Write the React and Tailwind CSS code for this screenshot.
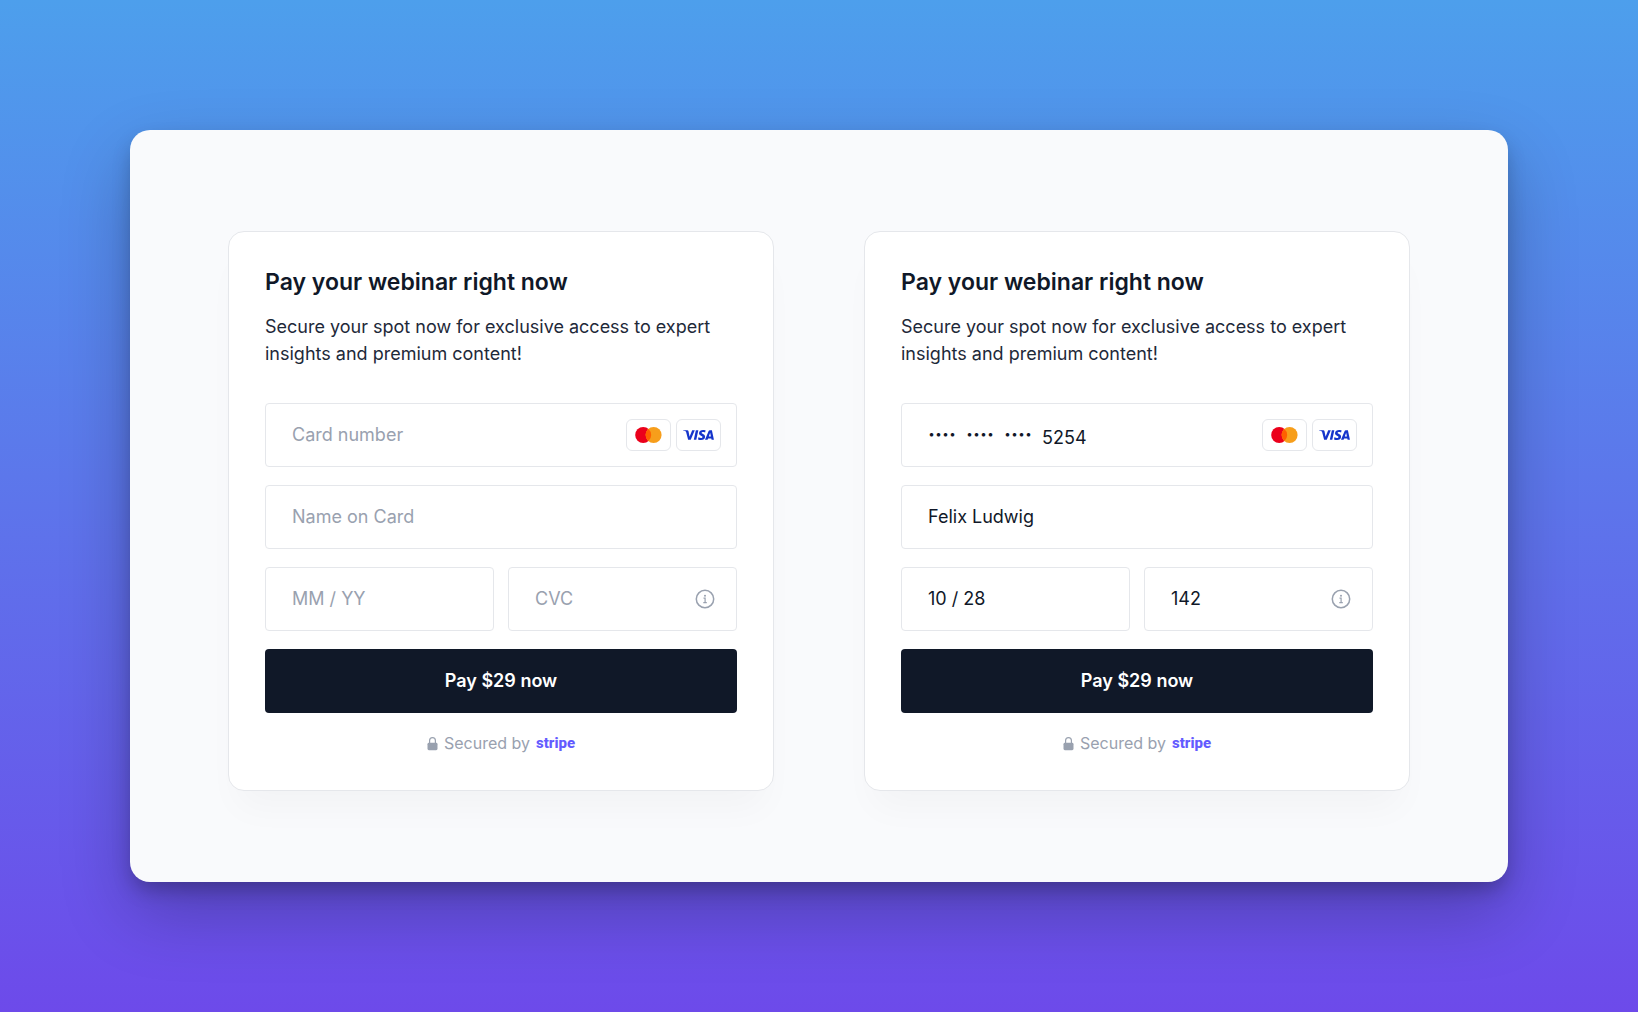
/**
 * App.jsx — Webinar checkout, empty and filled card forms
 * Stack: React + Tailwind v4
 */

import React, { useState } from 'react';

const EMPTY_CARD = { number: "", name: "", expiry: "", cvc: "" };
const SAVED_CARD = { number: "5254", name: "Felix Ludwig", expiry: "10 / 28", cvc: "142" };

const inputClass = "w-full min-w-0 bg-transparent text-lg text-gray-900 placeholder:text-gray-400 outline-none";
const boxClass = "flex h-16 items-center rounded-sm border border-gray-200 bg-white pl-[26px]";

const MastercardLogo = () => (
  <span className="flex h-8 w-[45px] items-center justify-center rounded-md border border-gray-200 bg-white">
    <svg width="27" height="16" viewBox="0 0 27 16" role="img" aria-label="Mastercard">
      <circle cx="8.2" cy="8" r="8" fill="#eb001b" />
      <circle cx="18.6" cy="8" r="8" fill="#f79e1b" />
      <path d="M13.4 1.92a8 8 0 0 1 0 12.16a8 8 0 0 1 0-12.16Z" fill="#ff5f00" />
    </svg>
  </span>
);

const VisaLogo = () => (
  <span className="flex h-8 w-[45px] items-center justify-center rounded-md border border-gray-200 bg-white">
    <svg width="31" height="10" viewBox="0 0 1000 324" role="img" aria-label="Visa">
      <path
        fill="#1434cb"
        d="M651.2.5c-70.9 0-134.3 36.8-134.3 104.7 0 77.9 112.4 83.3 112.4 122.4 0 16.5-18.9 31.2-51.1 31.2-45.7 0-79.9-20.6-79.9-20.6l-14.6 68.5s39.4 17.4 91.6 17.4c77.5 0 138.4-38.5 138.4-107.5 0-82.2-112.9-87.4-112.9-123.7 0-12.9 15.5-27 47.6-27 36.3 0 65.9 15 65.9 15l14.3-66.2S696.6.5 651.2.5ZM2.2 5.5.5 15.5s29.8 5.5 56.7 16.4c34.6 12.5 37.1 19.8 42.9 42.4l63.5 244.8h85.1L379.9 5.5h-85l-84.3 213.2-34.4-180.7c-3.2-20.7-19.1-32.5-38.7-32.5H2.2Zm411.9 0-66.6 313.6h81L494.9 5.5h-80.8Zm451.8 0c-19.5 0-29.9 10.5-37.5 28.7L709.7 319.1h85l16.4-47.5h103.6l10 47.5h75L934.2 5.5h-68.3Zm11 84.7 25.2 117.7h-67.5l42.3-117.7Z"
      />
    </svg>
  </span>
);

const InfoIcon = () => (
  <svg width="20" height="20" viewBox="0 0 20 20" fill="none" stroke="currentColor" aria-hidden="true">
    <circle cx="10" cy="10" r="8.7" strokeWidth="1.5" />
    <path d="M8.5 9.2h1.6v4.2M8.3 13.6h3.5" strokeWidth="1.2" />
    <circle cx="10" cy="6.7" r="1" fill="currentColor" stroke="none" />
  </svg>
);

const LockIcon = () => (
  <svg width="11" height="14" viewBox="0 0 11 14" fill="none" aria-hidden="true">
    <path d="M2.6 6.5V3.6a2.9 2.9 0 0 1 5.8 0v2.9" stroke="currentColor" strokeWidth="1.2" />
    <rect x="0.5" y="5.8" width="10" height="7.4" rx="1.4" fill="currentColor" />
  </svg>
);

const PaymentCard = ({ id, initial }) => {
  const [card, setCard] = useState(initial);
  const masked = initial.number !== "";

  const handleChange = (e) => {
    setCard(prev => ({ ...prev, [e.target.name]: e.target.value }));
  };

  return (
    <form
      onSubmit={(e) => e.preventDefault()}
      className="flex-1 rounded-2xl border border-gray-200 bg-white p-9 shadow-[0_26px_36px_-10px_rgba(0,0,0,0.03)]"
    >
      <h2 className="text-[23px] leading-7 font-semibold text-gray-900">Pay your webinar right now</h2>
      <p className="mt-[17px] text-lg leading-[27px] text-gray-800">
        Secure your spot now for exclusive access to expert insights and premium content!
      </p>

      <div className="mt-9 flex flex-col gap-[18px]">
        {/* Card number, with the hidden digits in front of the last four */}
        <div className={`${boxClass} pr-[15px]`}>
          {masked && (
            <span aria-hidden="true" className="mr-2.5 shrink-0 text-[21px] font-bold whitespace-pre text-gray-900">
              ····  ····  ····
            </span>
          )}
          <input
            name="number"
            aria-label="Card number"
            placeholder="Card number"
            value={card.number}
            onChange={handleChange}
            className={masked ? `${inputClass} pt-1.5` : inputClass}
          />
          <div className="flex shrink-0 gap-[5px]">
            <MastercardLogo />
            <VisaLogo />
          </div>
        </div>

        <div className={`${boxClass} pr-4`}>
          <input
            name="name"
            aria-label="Name on Card"
            placeholder="Name on Card"
            value={card.name}
            onChange={handleChange}
            className={inputClass}
          />
        </div>

        <div className="grid grid-cols-2 gap-3.5">
          <div className={`${boxClass} pr-4`}>
            <input
              name="expiry"
              aria-label="Expiry date"
              placeholder="MM / YY"
              value={card.expiry}
              onChange={handleChange}
              className={inputClass}
            />
          </div>
          <div className={`${boxClass} pr-[21px]`}>
            <input
              id={`${id}-cvc`}
              name="cvc"
              aria-label="CVC"
              placeholder="CVC"
              value={card.cvc}
              onChange={handleChange}
              className={inputClass}
            />
            <label htmlFor={`${id}-cvc`} className="shrink-0 text-gray-400">
              <InfoIcon />
            </label>
          </div>
        </div>

        <button type="submit" className="h-16 cursor-pointer rounded-sm bg-gray-900 text-lg font-semibold text-white">
          Pay $29 now
        </button>
      </div>

      <div className="mt-5 flex items-center justify-center gap-1.5 text-base leading-[21px] text-gray-400">
        <LockIcon />
        <span>Secured by</span>
        <span className="font-[Roboto,sans-serif] text-[15px] font-extrabold text-[#635bff]">stripe</span>
      </div>
    </form>
  );
};

const App = () => {
  return (
    <div className="flex min-h-screen flex-col bg-linear-to-b/srgb from-[#4d9fec] to-[#6d4aea] p-[130px] font-[Inter,sans-serif]">
      <main className="flex flex-1 items-start gap-[90px] rounded-[20px] bg-[#f9fafc] px-[98px] pt-[101px] pb-[89px] shadow-[0_30px_70px_rgba(0,0,0,0.24),0_10px_20px_-3px_rgba(0,0,0,0.25)]">
        <PaymentCard id="new" initial={EMPTY_CARD} />
        <PaymentCard id="saved" initial={SAVED_CARD} />
      </main>
    </div>
  );
};

export default App;
